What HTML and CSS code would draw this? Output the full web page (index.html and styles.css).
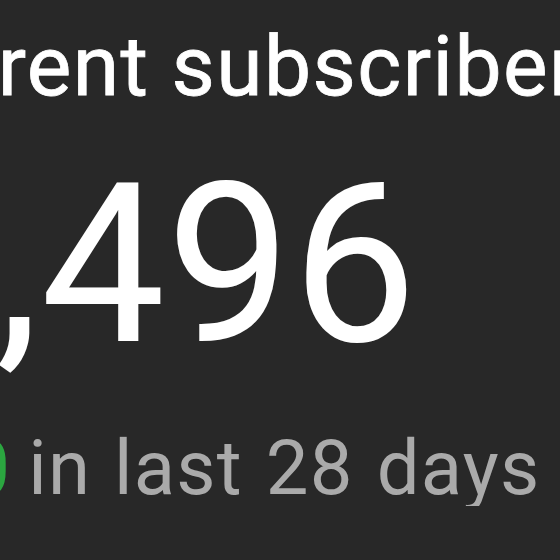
FILE: index.html
```html
<!DOCTYPE html>
<html>
<head>
<meta charset="utf-8">
<link rel="stylesheet" href="styles.css">
</head>
<body>
<div class="card">
  <div class="title">Current subscribers</div>
  <div class="value">1,496</div>
  <div class="change"><span class="up">+10</span> in last 28 days</div>
</div>
</body>
</html>
```
FILE: styles.css
```css
html, body {
  margin: 0;
  padding: 0;
  background: #282828;
  overflow: hidden;
}
.card {
  display: flex;
  flex-direction: column;
  margin-left: -130px;
  padding-top: 25px;
  white-space: nowrap;
  font-family: Roboto, "Liberation Sans", sans-serif;
}
.title {
  font-size: 84px;
  font-weight: 400;
  line-height: 1;
  color: #ffffff;
  letter-spacing: 1.4px;
  margin-left: -6px;
  -webkit-text-stroke: 0.8px #ffffff;
}
.value {
  font-size: 222px;
  font-weight: 400;
  line-height: 1;
  color: #ffffff;
  letter-spacing: 1px;
  margin-top: 45px;
}
.change {
  font-size: 76px;
  line-height: 1;
  color: #aaaaaa;
  letter-spacing: 1.2px;
  word-spacing: 3px;
  margin-top: 54px;
  margin-left: 9px;
}
.up {
  color: #2ba640;
  margin-right: -6px;
}
```
